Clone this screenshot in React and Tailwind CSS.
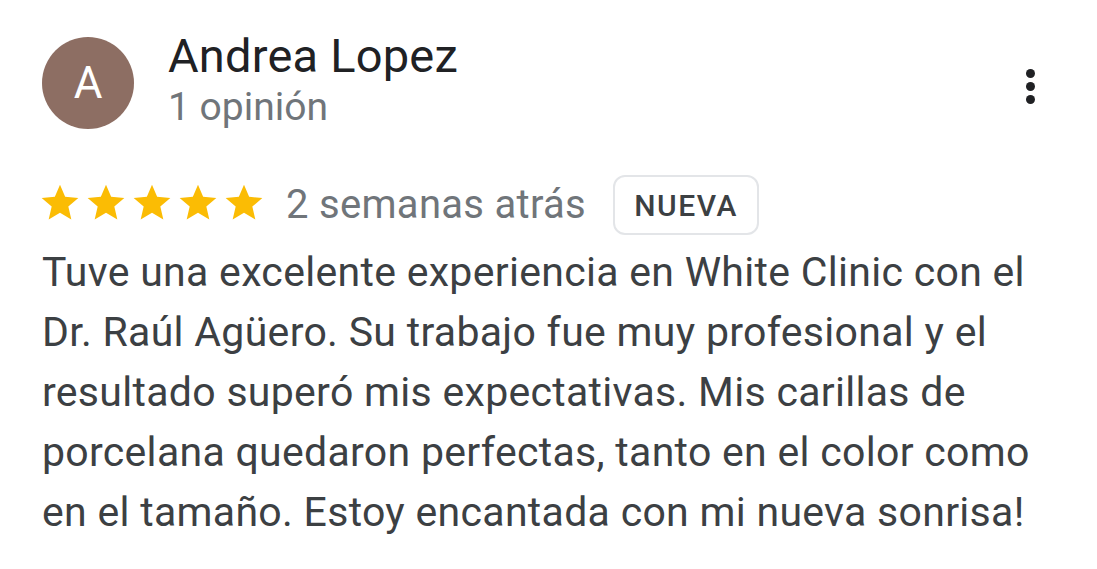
const lines = [
  'Tuve una excelente experiencia en White Clinic con el',
  'Dr. Raúl Agüero. Su trabajo fue muy profesional y el',
  'resultado superó mis expectativas. Mis carillas de',
  'porcelana quedaron perfectas, tanto en el color como',
  'en el tamaño. Estoy encantada con mi nueva sonrisa!',
];

function Star() {
  return (
    <svg viewBox="0 0 24 24" className="h-[44px] w-[44px] flex-shrink-0" fill="#fbbc04">
      <path d="M12 17.27L18.18 21l-1.64-7.03L22 9.24l-7.19-.61L12 2 9.19 8.63 2 9.24l5.46 4.73L5.82 21z" />
    </svg>
  );
}

export default function App() {
  return (
    <div className="h-[569px] w-[1097px] overflow-hidden bg-white font-['Roboto',sans-serif]">
      <div className="flex items-start pl-[42px] pr-[58px] pt-[37px]">
        <div className="flex h-[92px] w-[92px] flex-shrink-0 items-center justify-center rounded-full bg-[#8d6e63] text-[44px] text-white">
          A
        </div>
        <div className="ml-[34px] min-w-0 flex-1">
          <h2 className="-mt-[4px] text-[47px] leading-[46px] tracking-[0.2px] text-[#202124]">Andrea Lopez</h2>
          <p className="mt-[6px] text-[39px] leading-[44px] text-[#70757a]">1 opinión</p>
        </div>
        <button className="mt-[32px] flex flex-col items-center gap-[4px] px-[4px]">
          <span className="h-[9px] w-[9px] rounded-full bg-[#202124]" />
          <span className="h-[9px] w-[9px] rounded-full bg-[#202124]" />
          <span className="h-[9px] w-[9px] rounded-full bg-[#202124]" />
        </button>
      </div>

      <div className="mt-[46px] flex h-[60px] items-center pl-[42px]">
        <div className="-ml-[4px] -mt-[5px] flex items-center gap-[2px]">
          <Star />
          <Star />
          <Star />
          <Star />
          <Star />
        </div>
        <span className="ml-[20px] text-[40px] leading-[40px] tracking-[0.3px] text-[#70757a]">2 semanas atrás</span>
        <span className="ml-[27px] flex h-[60px] w-[146px] items-center justify-center rounded-[12px] border-2 border-[#e3e5e8] text-[30px] font-medium tracking-[1.5px] text-[#3c4043]">
          NUEVA
        </span>
      </div>

      <div className="mt-[7px] pl-[42px] text-[41px] leading-[60px] tracking-[0.3px] text-[#3c4043]">
        {lines.map((l) => (
          <p key={l} className="whitespace-nowrap">{l}</p>
        ))}
      </div>
    </div>
  );
}
